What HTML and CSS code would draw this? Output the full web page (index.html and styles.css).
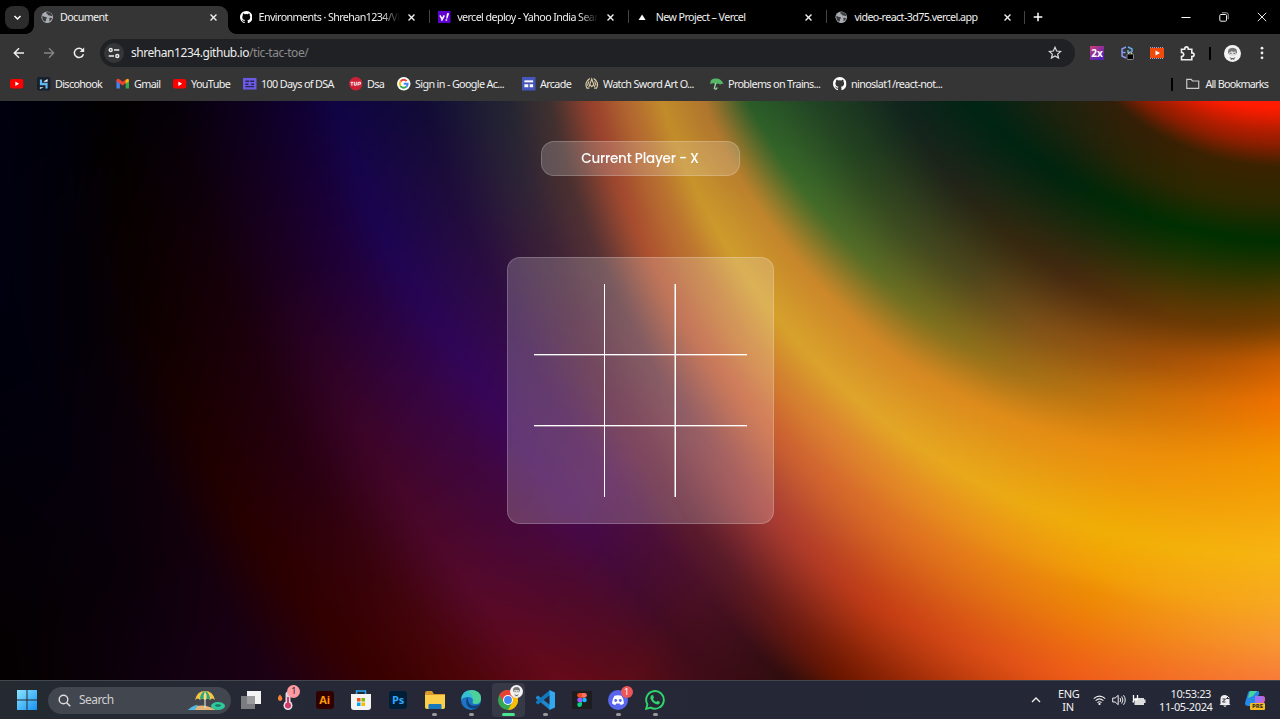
FILE: index.html
```html
<!DOCTYPE html>
<html lang="en">
<head>
<meta charset="utf-8">
<title>Document</title>
<link rel="stylesheet" href="styles.css">
</head>
<body>
<svg class="defs" width="0" height="0">
  <symbol id="x" viewBox="0 0 10 10"><path d="M1.7 1.7l6.6 6.6M8.3 1.7L1.7 8.3" fill="none" stroke="#f1f1f1" stroke-width="1.5"/></symbol>
  <symbol id="globe" viewBox="0 0 16 16"><circle cx="8" cy="8" r="7.4" fill="#a9adb1"/><path d="M2 6q2.5 2 5 1.600q1 1.600-.4 2.600q0 2.600-1.500 3.600Q1.400 12 1.700 7zM7 1.400q-1 2.600 1.500 2.700q.4 2 2.600 1.700l3.600 1q-.6-4-4.600-5.200zM10.500 9q2-1 3.700 0q-.8 3.500-3.700 4.500q1-2.500 0-4.500z" fill="#3b3c3e"/></symbol>
  <symbol id="gh" viewBox="0 0 16 16"><path fill="#fff" d="M8 0C3.580 0 0 3.580 0 8c0 3.540 2.290 6.530 5.470 7.590.4.070.55-.17.55-.38 0-.19-.01-.82-.01-1.490-2.010.37-2.530-.49-2.690-.94-.09-.23-.48-.94-.82-1.130-.28-.15-.68-.52-.01-.53.63-.01 1.080.58 1.230.82.72 1.210 1.870.87 2.330.66.07-.52.28-.87.51-1.070-1.780-.2-3.640-.89-3.640-3.950 0-.87.31-1.590.82-2.150-.08-.2-.36-1.020.08-2.120 0 0 .67-.21 2.200.82a7.600 7.600 0 014 0c1.530-1.040 2.200-.82 2.200-.82.44 1.100.16 1.920.08 2.120.51.56.82 1.270.82 2.150 0 3.070-1.870 3.750-3.650 3.950.29.25.54.73.54 1.480 0 1.070-.01 1.930-.01 2.200 0 .21.15.46.55.38A8 8 0 0016 8c0-4.420-3.580-8-8-8z"/></symbol>
  <symbol id="yt" viewBox="0 0 14 14"><rect y="2" width="14" height="10" rx="2.500" fill="#f00"/><path d="M5.500 4.700v4.600L9.500 7z" fill="#fff"/></symbol>
  <symbol id="avatar" viewBox="0 0 16 16"><circle cx="8" cy="8" r="8" fill="#f3f3f3"/><path d="M3.800 7q-.5-4.300 4.200-4.500Q12.700 2.700 12.200 7l-1 2H4.800z" fill="#777"/><path d="M5 6.800l2-1 2 .6 2-.4q.8 4-3 4.600Q4.500 10 5 6.800z" fill="#ddd"/><path d="M5.800 7.800h1.300M9 7.800h1.300M5.500 12l2.500 1 2.500-1M6.500 14L8 12.500 9.500 14" stroke="#444" stroke-width=".8" fill="none"/></symbol>
</svg>

<header class="tabstrip">
  <div class="tab-search"><svg width="9" height="9" viewBox="0 0 9 9"><path d="M1.500 3l3 3 3-3" fill="none" stroke="#fff" stroke-width="1.500"/></svg></div>
  <div class="tab tab-active"><svg class="fav"><use href="#globe"/></svg><span class="tab-title">Document</span><svg class="close"><use href="#x"/></svg></div>
  <div class="tab"><svg class="fav"><use href="#gh"/></svg><span class="tab-title fade">Environments · Shrehan1234/Video-React</span><svg class="close"><use href="#x"/></svg></div>
  <div class="tab sep"><svg class="fav" viewBox="0 0 16 16"><rect width="16" height="16" fill="#5f01d1"/><path d="M2.500 5.500l2.700 5M8 5.500l-3.500 7" stroke="#fff" stroke-width="2" fill="none"/><path d="M11.500 3h2.800l-2.200 6.500h-1.600zM9.700 10.500h2v2h-2z" fill="#fff"/></svg><span class="tab-title fade">vercel deploy - Yahoo India Search Results</span><svg class="close"><use href="#x"/></svg></div>
  <div class="tab sep"><svg class="fav" viewBox="0 0 16 16"><path d="M6.500 4.500l4.500 7H2z" fill="#fff"/></svg><span class="tab-title">New Project – Vercel</span><svg class="close"><use href="#x"/></svg></div>
  <div class="tab sep"><svg class="fav"><use href="#globe"/></svg><span class="tab-title">video-react-3d75.vercel.app</span><svg class="close"><use href="#x"/></svg></div>
  <div class="newtab"><svg width="10" height="10" viewBox="0 0 10 10"><path d="M5 .7v8.600M.7 5h8.600" stroke="#fff" stroke-width="1.500"/></svg></div>
  <div class="wincontrols">
    <svg width="10" height="10" viewBox="0 0 10 10"><path d="M.5 5.500h9" stroke="#fff"/></svg>
    <svg width="10" height="10" viewBox="0 0 10 10"><rect x=".8" y="2.500" width="6.700" height="6.700" rx="1" fill="none" stroke="#eee"/><path d="M2.800.8h4.700q1.700 0 1.700 1.700v4.700" fill="none" stroke="#aaa"/></svg>
    <svg width="10" height="10" viewBox="0 0 10 10"><path d="M.8.8l8.400 8.400M9.200.8L.8 9.200" stroke="#fff" stroke-width=".9"/></svg>
  </div>
</header>

<div class="toolbar">
  <svg class="nav" viewBox="0 0 12 12"><path d="M11 6H1.500M6 1.300L1.300 6 6 10.700" fill="none" stroke="#eee" stroke-width="1.500"/></svg>
  <svg class="nav" viewBox="0 0 12 12"><path d="M1 6h9.500M6 1.300L10.700 6 6 10.700" fill="none" stroke="#858585" stroke-width="1.300"/></svg>
  <svg class="nav" viewBox="0 0 12 12"><path d="M10.400 7.200A4.600 4.600 0 1 1 9.300 2.700l1 1" fill="none" stroke="#eee" stroke-width="1.500"/><path d="M11.200.6v4.500H6.700z" fill="#eee"/></svg>
  <div class="omnibox">
    <span class="site"><svg width="12" height="12" viewBox="0 0 12 12"><g fill="none" stroke="#eee" stroke-width="1.400"><circle cx="2.700" cy="3" r="1.500"/><path d="M6 3h5.300M.7 9H6"/><circle cx="9.300" cy="9" r="1.500"/></g></svg></span>
    <span class="url">shrehan1234.github.io<span class="path">/tic-tac-toe/</span></span>
    <svg class="star" viewBox="0 0 14 14"><path d="M7 1.300l1.650 3.700 4 .4-3 2.700.9 4L7 10l-3.550 2.100.9-4-3-2.700 4-.4z" fill="none" stroke="#ddd" stroke-width="1.200"/></svg>
  </div>
  <div class="extensions">
    <span class="two-x">2x</span>
    <svg width="14" height="14" viewBox="0 0 14 14"><g fill="none" stroke-width="1.500"><path d="M6 1L2 3v7l4 2M2 6.500h3.500" stroke="#8998f4"/><path d="M8 1l4 2v3M8 4v3" stroke="#5bb4e5"/></g><rect x="7" y="8" width="6.500" height="5.500" rx="1" fill="#000" stroke="#ccc" stroke-width=".6"/><path d="M8.700 8V6.700q1.500-1.700 3 0V8" fill="none" stroke="#ddd"/></svg>
    <svg width="14" height="14" viewBox="0 0 14 14"><rect y="2" width="14" height="10" fill="#f04a0c"/><path d="M0 1.500h14M0 12.500h14" stroke="#a8a3d8" stroke-dasharray="1 1"/><path d="M5.500 4.500v5L10 7z" fill="#fff"/></svg>
    <svg width="15" height="15" viewBox="0 0 15 15"><path d="M1.500 3.200h3.200Q4.700.9 6.500.9t1.800 2.300h3.500v3.700q2.300 0 2.300 1.800t-2.300 1.800v3.300H1.500v-3.300q2.200-.2 2.200-2T1.500 6.500z" fill="none" stroke="#eee" stroke-width="1.600"/></svg>
  </div>
  <i class="tb-divider"></i>
  <svg class="profile"><use href="#avatar"/></svg>
  <svg class="kebab" viewBox="0 0 4 14"><g fill="#eee"><circle cx="2" cy="2.200" r="1.400"/><circle cx="2" cy="7" r="1.400"/><circle cx="2" cy="11.800" r="1.400"/></g></svg>
</div>

<nav class="bookmarks">
  <a class="bm w27"><svg><use href="#yt"/></svg></a>
  <a class="bm w79"><svg viewBox="0 0 14 14"><rect width="14" height="14" rx="2" fill="#17212d"/><path d="M3 2.500h2.200v3.500H11V12H8.800V8.500H3z" fill="#62b8ee"/><path d="M7 4.500l4-2.500v3H7zM3 12.500V10.500h4z" fill="#e8f3fa"/></svg>Discohook</a>
  <a class="bm w57"><svg viewBox="0 0 14 14"><path d="M.5 3v9H4V6.500z" fill="#4285f4"/><path d="M13.500 3v9H10V6.500z" fill="#34a853"/><path d="M.5 4.500V3q1-2 3-.6L7 5l3.500-2.600q2-1.400 3 .6L7 8.800z" fill="#ea4335"/><path d="M10 3l2-1q1.500 0 1.500 2.300L10 7z" fill="#fbbc04"/></svg>Gmail</a>
  <a class="bm w70"><svg><use href="#yt"/></svg>YouTube</a>
  <a class="bm w106"><svg viewBox="0 0 14 14"><rect y="1" width="14" height="12" fill="#6b5be2"/><path d="M2.500 4.500h4M7.500 4.500h4M2.500 10h9M2.500 7.500h3M8.500 7.500h3" stroke="#292459" stroke-width="1.500"/></svg>100 Days of DSA</a>
  <a class="bm w48"><svg viewBox="0 0 14 14"><circle cx="7" cy="7" r="7" fill="#cc2037"/><path d="M1.500 5.500h3M3 5.500v3.500M5.500 5v3.500h2V5M9.300 9V5.500h2.500v2H9.300" fill="none" stroke="#fff"/></svg>Dsa</a>
  <a class="bm w125"><svg viewBox="0 0 14 14"><circle cx="7" cy="7" r="7" fill="#fff"/><g fill="none" stroke-width="2"><path d="M3.600 4.700A4.100 4.100 0 0 1 10 4.200" stroke="#ea4335"/><path d="M3.600 9.300a4.500 4.500 0 0 1 0-4.600" stroke="#fbbc05"/><path d="M3.600 9.300A4.100 4.100 0 0 0 9.800 10" stroke="#34a853"/><path d="M7 7h4q0 2-1.200 3" stroke="#4285f4"/></g></svg>Sign in - Google Ac...</a>
  <a class="bm w63"><svg viewBox="0 0 14 14"><rect width="14" height="14" fill="#4557bd"/><path d="M2.500 4.500h9" stroke="#fff" stroke-width="2"/><path d="M2.500 7.500h4v3h-4zM8 7.500h3.500v3H8z" fill="#fff"/></svg>Arcade</a>
  <a class="bm w125"><svg viewBox="0 0 14 14"><g fill="none" stroke="#d9caa8" stroke-width="1.200"><path d="M5 1.500Q-1 6 2 11.500h2.500M9 1.500q6 4.500 3 10H9.500"/><path d="M4 10.500L7 2l3 8.500M5 8l2 2 2-2M4 4.500L2.500 9M10 4.500L11.500 9"/></g></svg>Watch Sword Art O...</a>
  <a class="bm w123"><svg viewBox="0 0 14 14"><path d="M.5 7.500Q-.5 2 5 1.500q7-.5 9 6-2.500-1.200-3.500.5-2-2-4-.5Q3 5.500.5 7.500z" fill="#56b766"/><path d="M5.800 6.500L4.500 12q2 1.500 3-1" stroke="#9edfa6" fill="none" stroke-width="1.300"/></svg>Problems on Trains...</a>
  <a class="bm"><svg><use href="#gh"/></svg>ninoslat1/react-not...</a>
  <i class="bm-divider"></i>
  <a class="bm all"><svg viewBox="0 0 14 14"><path d="M.8 2.500h4.500l1.400 1.600h6.500v7.700H.8z" fill="none" stroke="#ccc" stroke-width="1.200"/></svg>All Bookmarks</a>
</nav>

<main class="page">
  <canvas class="aurora" id="aurora" width="1280" height="580"></canvas>
  <p class="status">Current Player - X</p>
  <section class="board">
    <div class="grid">
      <div class="cell"></div><div class="cell"></div><div class="cell"></div>
      <div class="cell"></div><div class="cell"></div><div class="cell"></div>
      <div class="cell"></div><div class="cell"></div><div class="cell"></div>
    </div>
  </section>
</main>

<footer class="taskbar">
  <svg class="start" viewBox="0 0 20 20"><defs><linearGradient id="win" x2="1" y2="1"><stop stop-color="#8be4ff"/><stop offset="1" stop-color="#1592f2"/></linearGradient></defs><path d="M0 0h9.500v9.500H0zM10.500 0H20v9.500h-9.500zM0 10.500h9.500V20H0zM10.500 10.500H20V20h-9.500z" fill="url(#win)"/></svg>
  <div class="search"><svg width="13" height="13" viewBox="0 0 13 13"><circle cx="5.500" cy="5.500" r="4.300" fill="none" stroke="#ddd" stroke-width="1.400"/><path d="M8.700 8.700l3.600 3.600" stroke="#ddd" stroke-width="1.500"/></svg><span>Search</span>
    <svg class="beach" width="38" height="23" viewBox="0 0 38 23"><path d="M0 21q14-9 28 0z" fill="#e4b779"/><path d="M0 21q5-5 10-5l-3 5z" fill="#52b9e6"/><path d="M17 2v17" stroke="#ddd" stroke-width="1.200"/><path d="M7 11Q9 2 17 2t10 9q-3-3-5 0-2-3-5 0-3-3-5 0-2-3-5 0z" fill="#f6c447"/><path d="M12 11q0-7 5-9 5 2 5 9-2-3-5 0-3-3-5 0z" fill="#2aa77d"/><path d="M15.500 10q0-5 1.500-8 2 3 1.500 8l-1.500 1z" fill="#f7dc80"/><ellipse cx="30" cy="17" rx="7" ry="4" fill="#2ec99d"/><ellipse cx="30" cy="16.500" rx="3" ry="1.200" fill="#17775f"/></svg>
  </div>
  <div class="apps">
    <div class="app"><svg viewBox="0 0 20 20"><path d="M6 1h14v13H6z" fill="#f3f3f3"/><path d="M0 6h14v13H0z" fill="#8b8b8d" opacity=".85"/></svg></div>
    <div class="app"><svg viewBox="0 0 20 20"><path d="M0 9.500q-1-2 2-5 3 3 2 5.500-2.500 2-4-.5z" fill="#f58231"/><path d="M10 4v9" stroke="#d9d9e3" stroke-width="5" stroke-linecap="round"/><circle cx="10" cy="15.500" r="4.500" fill="#e6e4ef"/><path d="M10 7v9" stroke="#d23b62" stroke-width="2"/><circle cx="10" cy="15.500" r="3" fill="#d23b62"/></svg><b class="badge pink">1</b></div>
    <div class="app"><span class="adobe ai">Ai</span></div>
    <div class="app"><svg viewBox="0 0 20 20"><path d="M5.500 5V1h9v4" fill="none" stroke="#28a8ea" stroke-width="1.500"/><path d="M0 4h20v13q0 3-3 3H3q-3 0-3-3z" fill="#f4f4f4"/><path d="M6 8h3.500v3.500H6z" fill="#f25022"/><path d="M10.500 8H14v3.500h-3.500z" fill="#7fba00"/><path d="M6 12.500h3.500V16H6z" fill="#00a4ef"/><path d="M10.500 12.500H14V16h-3.500z" fill="#ffb900"/></svg></div>
    <div class="app"><span class="adobe ps">Ps</span></div>
    <div class="app run"><svg viewBox="0 0 20 20"><path d="M0 3q0-2 2-2h5l2 3h11v14H0z" fill="#d9992b"/><path d="M0 5h20v12q0 2-2 2H2q-2 0-2-2z" fill="#fbcf4c"/><path d="M3.500 19v-4q0-1 1-1h11q1 0 1 1v4z" fill="#1878bf"/></svg></div>
    <div class="app run"><svg viewBox="0 0 20 20"><circle cx="10" cy="10" r="10" fill="#1b74c5"/><path d="M0 10Q1 0 10 0t10 8q0 6-5.500 6-4 0-2.500-3 0-4-5-4-5 0-7 3z" fill="#35bfd0"/><path d="M11 0q9 1 9 8 0 6-5.500 6-4 0-2.500-3 1-7-5-9z" fill="#57d68a" opacity=".75"/><path d="M7 7q-3 3-1 8 3 5 9 3 3-1 4-4-5 3-9 1-4-3-3-8z" fill="#10427e"/></svg></div>
    <div class="app current"><svg viewBox="0 0 20 20"><circle cx="10" cy="10" r="10" fill="#35a853"/><path d="M1.300 5A10 10 0 0 1 18.700 5L14.300 12.500z" fill="#e94235"/><path d="M18.700 5A10 10 0 0 1 10 20L14.500 12V5z" fill="#fbbc05"/><path d="M1.300 5h17.400H10L6 12.500z" fill="#e94235"/><circle cx="10" cy="10" r="5" fill="#fff"/><circle cx="10" cy="10" r="3.900" fill="#4285f4"/></svg><svg class="mini"><use href="#avatar"/></svg></div>
    <div class="app run"><svg viewBox="0 0 20 20"><path d="M1 7l2-1.500L15 15v5L1 8.500z" fill="#1e88cf"/><path d="M1 13l2 1.500L15 5V0L1 11.500z" fill="#1377bb"/><path d="M14.500 0L20 2.500v15L14.500 20z" fill="#31a9f0"/></svg></div>
    <div class="app"><svg viewBox="0 0 20 20"><path d="M0 1h20v18H0z" fill="#1d1d20"/><path d="M10 3H7.500a2.300 2.300 0 0 0 0 4.700H10z" fill="#f24e1e"/><path d="M10 3h2.500a2.300 2.300 0 0 1 0 4.700H10z" fill="#ff7262"/><path d="M10 7.700H7.500a2.300 2.300 0 0 0 0 4.600H10z" fill="#a259ff"/><circle cx="12.500" cy="10" r="2.300" fill="#1abcfe"/><path d="M7.500 12.300H10v2.300a2.400 2.400 0 1 1-2.500-2.300z" fill="#0acf83"/></svg></div>
    <div class="app run"><svg viewBox="0 0 20 20"><circle cx="10" cy="10" r="10" fill="#5866ee"/><path d="M6.500 5.800q3.500-1.200 7 0 2.500 3.500 2.500 7.500-1.500 1.500-3.300 1.700l-1-1.500H8.300l-1 1.500Q5.500 14.800 4 13.300q0-4 2.500-7.500z" fill="#fff"/><circle cx="7.700" cy="10.500" r="1.400" fill="#5866ee"/><circle cx="12.300" cy="10.500" r="1.400" fill="#5866ee"/></svg><b class="badge red">1</b></div>
    <div class="app run"><svg viewBox="0 0 20 20"><path d="M1.200 18.800l1.200-4.500A8.800 8.800 0 1 1 5.800 17.600z" fill="none" stroke="#2fd46b" stroke-width="1.900"/><path d="M6.500 5.300l1.500-.2L9 7.600l-1 1.300q1 2.100 3.200 3l1.300-1.200 2.500 1.300q-.2 2.500-2.600 2.500-5-.9-7-5.900-.4-2 1.100-3.300z" fill="#2fd46b"/></svg></div>
  </div>
  <div class="tray">
    <svg class="chev" viewBox="0 0 10 6"><path d="M1 5l4-4 4 4" fill="none" stroke="#eee" stroke-width="1.300"/></svg>
    <div class="lang">ENG<br>IN</div>
    <svg class="wifi" viewBox="0 0 14 12"><g fill="none" stroke="#eee" stroke-width="1.200"><path d="M.8 4.500q6.200-5.500 12.400 0M2.800 6.700q4.200-3.700 8.400 0M4.800 8.800q2.200-1.900 4.400 0"/></g><circle cx="7" cy="10.300" r="1.200" fill="#fff"/></svg>
    <svg class="vol" viewBox="0 0 14 12"><g fill="none" stroke="#eee"><path d="M.7 4h2.500l3-2.700v9.400l-3-2.700H.7zM8 4q1.500 2 0 4M9.700 2.500q2.500 3.500 0 7M11.500 1.200q3.500 4.800 0 9.600"/></g></svg>
    <svg class="bat" viewBox="0 0 14 12"><path d="M2.500 4H12v1.500h1.500v3.500H12v2H2.500z" fill="#ddd"/><path d="M1.500 1v4q3 2 4 0V1M1 8.500l1-4" stroke="#fff" fill="none" stroke-width="1.300"/></svg>
    <div class="clock">10:53:23<br>11-05-2024</div>
    <svg class="bell" viewBox="0 0 12 13"><path d="M1.500 10V5q0-4 4.500-4t4.500 4v5l1 1H.5zM4 11.500h4L6 13z" fill="#eee"/><path d="M3.500 5h3l-3 3h3M7.500 1.500h3l-3 3h3" stroke="#30313c" fill="none"/></svg>
    <div class="copilot"><svg viewBox="0 0 20 20"><path d="M5 1h7q3 0 2 3l-4 9q-1 3-4 3H3q-3 0-3-3L3 3q.500-2 2-2z" fill="#2489e8"/><path d="M3 8L5 1h7L8 6z" fill="#4bd39c"/><path d="M10 6h7q4 0 3 4l-2 6q-1 3-4 3H7q2 0 3-3z" fill="#d65fc9"/><path d="M10 6h7l2 2-5 6-4 1z" fill="#a371ed"/></svg><b>PRE</b></div>
  </div>
</footer>
<script src="aurora.js"></script>
</body>
</html>
```
FILE: styles.css
```css
* { box-sizing: border-box; }
body { margin: 0; width: 1280px; height: 719px; overflow: hidden; background: #000; color: #f0f0f0; font: 11px/14px "Noto Sans", "Open Sans", sans-serif; display: flex; flex-direction: column; }
svg { display: block; flex: none; }
.defs { position: absolute; }

.tabstrip { height: 34px; flex: none; background: #000; display: flex; align-items: center; padding-left: 5px; }
.tab-search { width: 24px; height: 23px; margin-right: 5px; border-radius: 8px; background: #2c2c2c; display: grid; place-items: center; }
.tab { position: relative; width: 198.6px; height: 28px; margin-top: 6px; padding: 0 15px 6px 7px; display: flex; align-items: center; font-size: 10.700px; letter-spacing: -.580px; }
.tab-active { background: #353535; border-radius: 9px 9px 0 0; width: 194px; margin-right: 4.600px; padding-right: 10.400px; }
.tab-active::before, .tab-active::after { content: ""; position: absolute; bottom: 0; width: 8px; height: 8px; }
.tab-active::before { left: -8px; background: radial-gradient(circle at 0 0, transparent 7.500px, #353535 8px); }
.tab-active::after { right: -8px; background: radial-gradient(circle at 100% 0, transparent 7.500px, #353535 8px); }
.tab.sep::before { content: ""; position: absolute; left: -2px; top: 4px; width: 1px; height: 13px; background: #444; }
.fav { width: 12.500px; height: 12.500px; margin-right: 6.500px; }
.tab-title { flex: 1; overflow: hidden; white-space: nowrap; }
.fade { max-width: 142px; margin-right: auto; -webkit-mask-image: linear-gradient(90deg, #000 122px, transparent 141px); mask-image: linear-gradient(90deg, #000 122px, transparent 141px); }
.close { width: 9px; height: 9px; }
.newtab { width: 26px; height: 13px; padding-left: 8px; margin-left: -3px; border-left: 1px solid #444; display: flex; align-items: center; }
.wincontrols { margin-left: auto; display: flex; gap: 28px; padding-right: 13.500px; }

.toolbar { height: 38px; flex: none; background: #353535; display: flex; align-items: center; padding-left: 13px; }
.nav { width: 12px; height: 12px; margin-right: 18px; }
.omnibox { width: 975px; height: 28px; border-radius: 14px; margin-left: -3px; background: #202124; display: flex; align-items: center; padding: 0 13px 0 4px; }
.site { width: 20px; height: 20px; border-radius: 50%; background: #353638; display: grid; place-items: center; margin-right: 7px; }
.url { flex: 1; font-size: 12px; letter-spacing: -.450px; color: #eee; }
.path { color: #8a8b8d; }
.star { width: 14px; height: 14px; }
.extensions { display: flex; align-items: center; gap: 16px; margin-left: 15px; }
.two-x { width: 14px; height: 14px; background: linear-gradient(145deg, #d43c7a, #5524b5 80%); color: #fff; font: bold 10px/14px "Open Sans", sans-serif; text-align: center; }
.tb-divider { width: 2px; height: 13px; margin: 0 13px 0 14px; background: #000; }
.profile { width: 17px; height: 17px; margin-right: 19px; }
.kebab { width: 4px; height: 14px; }

.bookmarks { height: 29px; flex: none; background: #353535; display: flex; align-items: center; padding: 0 11px 5px 10px; font-size: 10.800px; letter-spacing: -.650px; }
.bm { display: flex; align-items: center; gap: 4.500px; white-space: nowrap; }
.bm svg { width: 13.500px; height: 13.500px; }
.bm.all { width: 83px; gap: 6px; letter-spacing: -.780px; }
.w27 { width: 27px; } .w48 { width: 48px; } .w57 { width: 57px; } .w63 { width: 63px; } .w70 { width: 70px; }
.w79 { width: 79px; } .w106 { width: 106px; } .w123 { width: 123px; } .w125 { width: 125px; }
.bm-divider { width: 2px; height: 13px; margin: 0 13px 0 auto; background: #000; }

.page { position: relative; height: 579px; flex: none; display: flex; flex-direction: column; align-items: center; overflow: hidden; }
.aurora { position: absolute; inset: 0; }
.status { position: relative; width: 199px; height: 35px; margin: 40px 0 81px; border: 1px solid rgba(255,255,255,.2); border-radius: 13px; background: rgba(255,255,255,.18); color: #fff; text-align: center; font: 500 13.500px/33px Poppins, Inter, sans-serif; letter-spacing: -.2px; }
.board { position: relative; width: 267px; height: 267px; padding: 26px; border: 1px solid rgba(255,255,255,.2); border-radius: 13px; background: rgba(255,255,255,.2); }
.grid { display: grid; grid-template: 71px 71px 71px / 71px 71px 71px; }
.cell { border: 0 solid #fff; }
.cell:not(:nth-child(3n)) { border-right-width: 1px; }
.cell:nth-child(-n+6) { border-bottom-width: 1px; box-shadow: 0 1px rgba(255,255,255,.35); }
.cell:nth-child(3n+2) { box-shadow: inset -1px 0 rgba(255,255,255,.5); }
.cell:nth-child(2), .cell:nth-child(5) { box-shadow: inset -1px 0 rgba(255,255,255,.5), 0 1px rgba(255,255,255,.35); }

.taskbar { height: 39px; flex: none; background: linear-gradient(90deg, #242a30, #262837 30%, #242736); border-top: 1px solid #43464c; display: flex; align-items: center; padding-left: 17px; }
.start { width: 20px; height: 20px; }
.search { width: 183px; height: 27px; margin-left: 11px; border-radius: 14px; background: #42464e; display: flex; align-items: center; padding: 0 5px 0 10px; gap: 8px; color: #d0d1d3; font-size: 12px; letter-spacing: -.550px; }
.beach { margin-left: auto; }
.apps { display: flex; margin-left: 2px; isolation: isolate; }
.app { position: relative; width: 36.700px; height: 34px; display: grid; place-items: center; }
.app > svg { width: 20px; height: 20px; }
.run::after, .current::after { content: ""; position: absolute; bottom: 1px; left: 16px; width: 5px; height: 3px; border-radius: 2px; background: #999; }
.current::before { content: ""; position: absolute; inset: 0 2px; border-radius: 4px; background: #373a46; z-index: -1; }
.current::after { left: 12px; width: 13px; background: #49e392; }
.app > .mini { position: absolute; width: 13px; height: 13px; right: 4px; top: 2px; }
.adobe { width: 18px; height: 18px; border-radius: 3px; font: bold 11px/17px "Open Sans", sans-serif; text-align: center; }
.ai { background: #310000; color: #ff9a00; }
.ps { background: #001e36; color: #31a8ff; }
.badge { position: absolute; top: 3px; right: 4px; width: 12px; height: 12px; border-radius: 50%; font: 9px/12px "Noto Sans", sans-serif; text-align: center; }
.pink { background: #ff9aa2; color: #222; width: 13px; height: 13px; top: 2px; right: 6px; } .red { background: #ef5457; color: #fff; }
.tray { margin-left: auto; display: flex; align-items: center; line-height: 13px; letter-spacing: -.4px; }
.chev { width: 10px; height: 6px; margin-right: 17px; }
.lang { width: 20px; text-align: center; margin-right: 15px; }
.wifi { width: 13px; height: 12px; margin-right: 6px; } .vol { width: 14px; height: 12px; margin-right: 6px; } .bat { width: 14px; height: 12px; margin-right: 13px; }
.clock { width: 52px; text-align: right; margin-right: 8px; white-space: nowrap; }
.bell { width: 12px; height: 13px; margin-right: 14px; }
.copilot { position: relative; width: 20px; height: 20px; margin-right: 15px; }
.copilot svg { width: 20px; height: 20px; }
.copilot b { position: absolute; left: 5px; bottom: 0; width: 15px; height: 7px; background: #f6bb24; border-radius: 1px; color: #222; font: bold 6px/7px "Open Sans", sans-serif; text-align: center; letter-spacing: 0; }
```
FILE: aurora.js
```javascript
// Concentric colour rings around a point above the top right corner.
// Every ring lists a radius and a colour for each of the angles below.
const angles = [10, 20, 30, 40, 50, 60, 75, 90];
const rings = [
  [[195,195,195,195,195,195,195,195], 'ff1c00 ff1c00 ff1c00 ff1c00 ff1c00 ff1c00 ff1c00 ff1c00'],
  [[225,225,225,225,225,225,225,225], '9a1d00 9a1d00 9a1d00 9a1d00 9a1d00 9a1d00 a01d00 a01d00'],
  [[252,252,252,252,250,252,253,255], '2a2010 2a2010 2a2010 2a2010 321f08 351f04 3a2200 3a2200'],
  [[300,300,300,295,290,290,290,290], '102018 102018 15211a 1c220e 22220a 282404 2c2800 2c2800'],
  [[360,360,360,350,340,333,328,328], '002418 002418 002414 002412 00240e 002906 003000 002e00'],
  [[420,420,420,420,419,418,420,410], '102420 102420 12241c 202418 32280f 44290f 683805 703c00'],
  [[480,480,480,485,475,480,460,450], '1c3a24 1c3a24 22401f 3a481f 4e461c 805218 a05008 c85c00'],
  [[560,560,548,538,534,528,503,490], '2a5c28 2a5c28 3c6a29 566c26 7c6f1e a07018 c87008 ee7200'],
  [[603,603,597,590,585,575,560,550], 'b0762e b0762e c0852c cc882a d48824 de8c1a ec8e0c f39600'],
  [[643,643,643,643,643,643,643,643], 'bf8628 c28c2a cd9a2c d6a02c e0a42a e8a81c f1ae04 f7b412'],
  [[675,675,680,685,685,685,680,690], 'b06430 b46a30 bb7030 cc7c30 dc8030 e68c20 f2a005 f7a820'],
  [[708,710,715,720,724,718,705,725], '963e2c 9c452e b05430 c05a32 d06430 e07420 ee8c04 f89830'],
  [[750,755,765,775,785,800,790,768], '33302f 49302f 573038 743640 a83c34 c23c14 ee5c18 f87c38'],
  [[790,800,810,830,855,880,870,850], '1a2430 2e2436 481c36 601b37 581a28 6a1600 c03000 f06030'],
  [[880,870,870,875,890,920,920,900], '0b0a34 200c3c 360b48 4c0c4c 4a1024 250b05 600000 600000'],
  [[960,950,925,920,940,970,980,980], '0e0442 1c0450 340558 460850 440c1e 300b08 300b08 300b08'],
  [[1000,995,980,975,990,1040,1040,1040], '0e0030 1e0038 380540 480838 580c18 300808 300808 300808'],
  [[1055,1050,1050,1050,1050,1060,1060,1060], '0c001c 1c0022 3c0428 54092a 6c0a10 600808 600808 600808'],
  [[1120,1120,1120,1120,1120,1120,1120,1120], '050008 160008 280010 440408 5c0404 5c0404 5c0404 5c0404'],
  [[1182,1195,1198,1180,1180,1180,1180,1180], '020000 0e0000 250000 380000 380000 380000 380000 380000'],
  [[1240,1260,1260,1270,1270,1270,1270,1270], '00000a 050007 11000c 200018 200018 200018 200018 200018'],
  [[1330,1330,1330,1350,1350,1350,1350,1350], '000012 00000c 090009 1c0018 1c0018 1c0018 1c0018 1c0018'],
  [[1500,1500,1500,1500,1500,1500,1500,1500], '00000c 000008 030000 050000 050000 050000 050000 050000']
].map(([radius, colours]) => ({
  radius,
  colours: colours.split(' ').map(h => [0, 2, 4].map(i => parseInt(h.slice(i, i + 2), 16)))
}));

const centre = { x: 1276, y: -189 };
const canvas = document.getElementById('aurora');
const ctx = canvas.getContext('2d');
const image = ctx.createImageData(canvas.width, canvas.height);
const mix = (a, b, t) => a + (b - a) * t;

for (let y = 0; y < canvas.height; y++) {
  for (let x = 0; x < canvas.width; x++) {
    const dx = centre.x - x, dy = y - centre.y;
    const r = Math.hypot(dx, dy);
    const a = Math.min(90, Math.max(10, Math.atan2(dy, dx) * 180 / Math.PI));
    let i = 0;
    while (i < angles.length - 2 && a > angles[i + 1]) i++;
    const t = (a - angles[i]) / (angles[i + 1] - angles[i]);
    let k = 0;
    while (k < rings.length - 2 && r > mix(rings[k + 1].radius[i], rings[k + 1].radius[i + 1], t)) k++;
    const A = rings[k], B = rings[k + 1];
    const ra = mix(A.radius[i], A.radius[i + 1], t);
    const rb = mix(B.radius[i], B.radius[i + 1], t);
    const u = Math.min(1, Math.max(0, (r - ra) / (rb - ra)));
    const s = mix(u, u * u * (3 - 2 * u), 0.25);
    const o = (y * canvas.width + x) * 4;
    for (let c = 0; c < 3; c++) {
      image.data[o + c] = mix(mix(A.colours[i][c], A.colours[i + 1][c], t), mix(B.colours[i][c], B.colours[i + 1][c], t), s);
    }
    image.data[o + 3] = 255;
  }
}
ctx.putImageData(image, 0, 0);
```
